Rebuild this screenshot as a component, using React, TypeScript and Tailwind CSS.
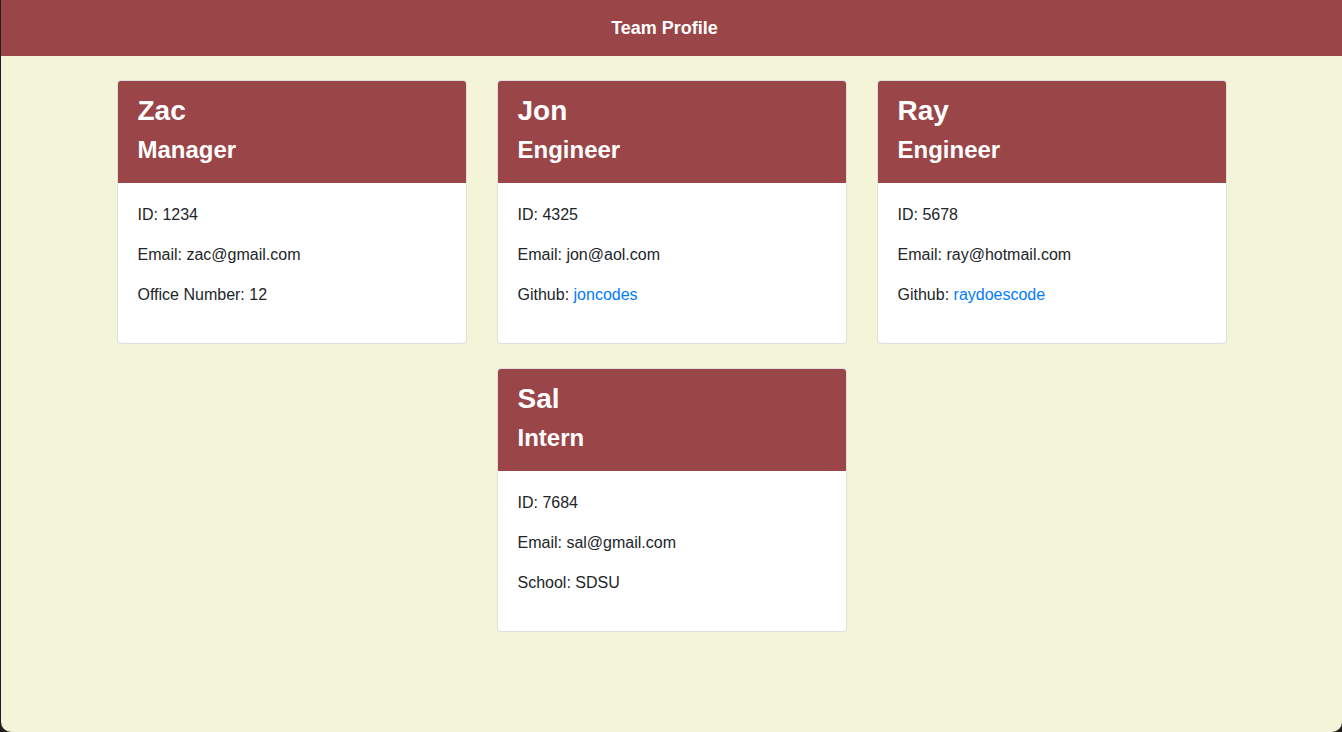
import React from "react";

interface Member {
	name: string;
	role: string;
	id: string;
	email: string;
	extraLabel: string;
	extraValue: string;
	link?: boolean;
}

const team: Member[] = [
	{ name: "Zac", role: "Manager", id: "1234", email: "zac@gmail.com", extraLabel: "Office Number", extraValue: "12" },
	{ name: "Jon", role: "Engineer", id: "4325", email: "jon@aol.com", extraLabel: "Github", extraValue: "joncodes", link: true },
	{ name: "Ray", role: "Engineer", id: "5678", email: "ray@hotmail.com", extraLabel: "Github", extraValue: "raydoescode", link: true },
	{ name: "Sal", role: "Intern", id: "7684", email: "sal@gmail.com", extraLabel: "School", extraValue: "SDSU" },
];

const Card = ({ member }: { member: Member }) => {
	return (
		<div className="w-[350px] bg-white border border-[rgba(0,0,0,0.125)] rounded-[4px] overflow-hidden">
			<div className="bg-[#9a4548] text-white px-5 pt-[13px] pb-[11px]">
				<h3 className="text-[28px] leading-[33px] font-bold mb-2">{member.name}</h3>
				<h4 className="text-[24px] leading-[29px] font-bold mb-2">{member.role}</h4>
			</div>
			<div className="p-5 text-[16px] leading-6 text-[#212529]">
				<p className="mb-4">ID: {member.id}</p>
				<p className="mb-4">Email: {member.email}</p>
				<p className="mb-4">
					{member.extraLabel}:{" "}
					{member.link ? (
						<a className="text-[#007bff]" href="#">{member.extraValue}</a>
					) : (
						member.extraValue
					)}
				</p>
			</div>
		</div>
	);
};

const App = () => {
	return (
		<div className="w-full h-[732px] bg-[#1e1e1e] pl-px" style={{ fontFamily: '"Liberation Sans", Arial, sans-serif' }}>
			<div className="h-full bg-[#f3f4d8] rounded-b-[10px] overflow-hidden">
				<nav className="h-14 bg-[#9a4548] flex items-center justify-center">
					<span className="text-white text-[18px] font-bold mr-[14px]">Team Profile</span>
				</nav>
				<div className="w-[1110px] mx-auto mt-6 flex flex-wrap justify-center gap-x-[30px] gap-y-[24px]">
					{team.map((m) => (
						<Card key={m.id} member={m} />
					))}
				</div>
			</div>
		</div>
	);
};

export default App;
